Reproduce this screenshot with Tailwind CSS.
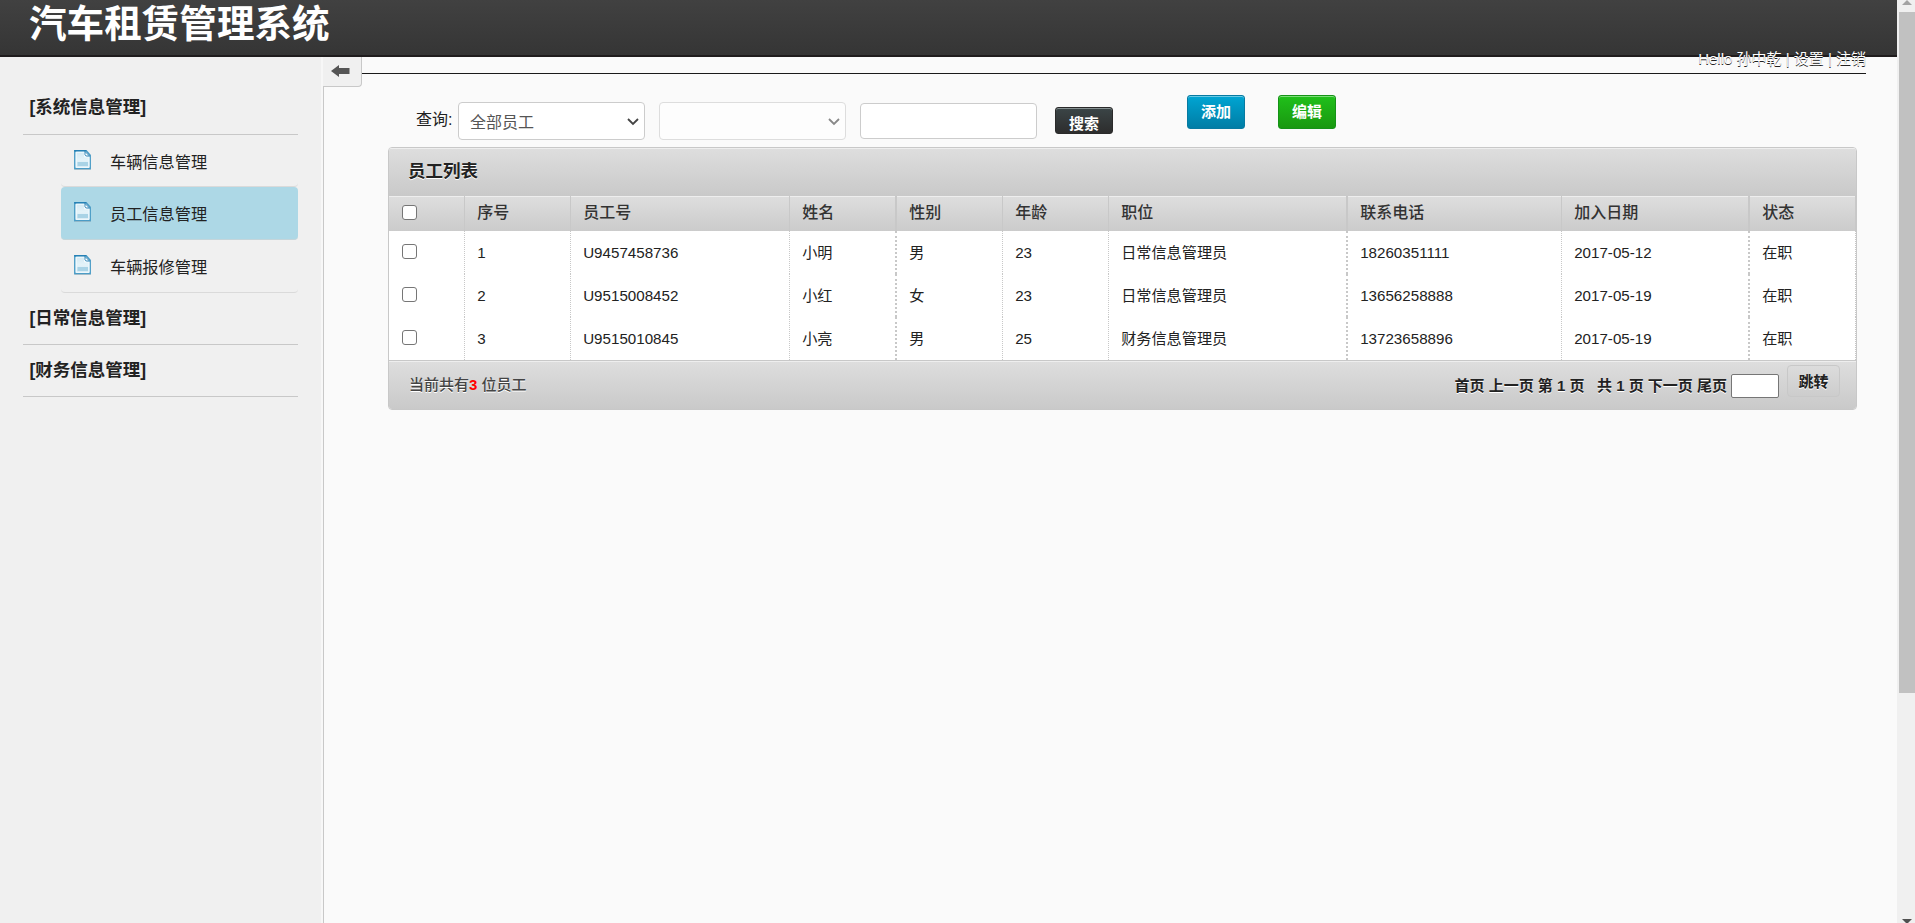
<!DOCTYPE html>
<html lang="zh-CN">
<head>
<meta charset="utf-8">
<title>汽车租赁管理系统</title>
<script src="https://cdn.jsdelivr.net/npm/@tailwindcss/browser@4"></script>
</head>
<body class="h-[923px] w-[1915px] overflow-hidden bg-[#fafafa] font-['Liberation_Sans','Noto_Sans_CJK_SC',sans-serif] text-[#222]">
<svg class="absolute size-0">
  <defs><linearGradient id="sheet" x1="0" y1="0" x2="0" y2="1"><stop offset="0" stop-color="#d2e8f2"/><stop offset=".5" stop-color="#e4f3f9"/><stop offset="1" stop-color="#cfe7f2"/></linearGradient></defs>
  <symbol id="doc" viewBox="0 0 17 20">
    <path d="M.8.8h11.400l4 4.500v13.400H.8z" fill="url(#sheet)" stroke="#4b9cc6" stroke-width="1.500"/>
    <path d="M.2.8h12" stroke="#2480b5" stroke-width="1.500"/>
    <path d="M2.200 2.200h8.300v4.800h4.500v10.300H2.200z" fill="none" stroke="#f4fbfe"/>
    <path d="M3.500 12h10.500v4H3.500z" fill="#a9d3e6"/>
    <path d="M11 1.500v3.200l1.200 1.300h3.300z" fill="#fff" stroke="#3487b7"/>
    <path d="M1 19.700h15.500" stroke="#a5b4bc" stroke-width=".7"/>
  </symbol>
</svg>
<div class="flex h-full">
  <div class="flex w-[1897px] flex-col">
    <header class="h-[57px] border-b-2 border-[#1f1c1d] bg-gradient-to-b from-[#414141] to-[#353535] pl-[29px]">
      <h1 class="text-[37.600px] leading-[48px] font-bold text-white">汽车租赁管理系统</h1>
    </header>
    <div class="flex flex-1">
      <aside class="w-[324px] border-r border-[#c8c8c8] bg-[#f0f0f0] pt-[25px] pl-[23px] shadow-[inset_-2px_0_0_#f7f7f7]">
        <nav class="w-[275px] font-bold text-[17.500px]">
          <h2 class="h-[53px] border-b border-[#c8c8c8] pl-[6.500px] leading-[50px]">[系统信息管理]</h2>
          <ul class="pl-[38px] text-[16.200px] font-normal">
            <li class="flex h-[52px] rounded-[4px] border-b border-[#dadada] pt-[15px] pl-[13px]"><svg class="h-5 w-[17px]"><use href="#doc"/></svg><a class="ml-[19px] leading-6">车辆信息管理</a></li>
            <li class="flex h-[53px] rounded-[4px] border-b border-[#c4d5da] bg-[#add8e6] pt-[15px] pl-[13px]"><svg class="h-5 w-[17px]"><use href="#doc"/></svg><a class="ml-[19px] leading-6">员工信息管理</a></li>
            <li class="flex h-[53px] rounded-[4px] border-b border-[#dadada] pt-[15px] pl-[13px]"><svg class="h-5 w-[17px]"><use href="#doc"/></svg><a class="ml-[19px] leading-6">车辆报修管理</a></li>
          </ul>
          <h2 class="h-[52px] border-b border-[#c8c8c8] pl-[6.500px] leading-[50px]">[日常信息管理]</h2>
          <h2 class="h-[52px] border-b border-[#c8c8c8] pl-[6.500px] leading-[50px]">[财务信息管理]</h2>
        </nav>
      </aside>
      <main class="flex w-[1573px] flex-col">
        <div class="flex h-[30px]">
          <button class="-ml-px flex h-[30px] w-[39px] items-start rounded-br-[4px] border-r border-b border-[#c8c8c8] bg-[#f0f0f0] pt-2 pl-2">
            <svg class="h-3 w-[19px]" viewBox="0 0 19 12"><path d="M0 6l8-6v3h10.500v6H8v3z" fill="#555"/></svg>
          </button>
          <div class="relative h-[17px] w-[1504px] border-b border-[#1a1a1a]">
            <p class="absolute right-0 -top-[8px] text-[15px] leading-5 whitespace-nowrap text-white [text-shadow:0_1px_0_#222]">Hello 孙中乾 | 设置 | 注销</p>
          </div>
        </div>
        <section class="flex h-[60px] items-start pl-[92px]">
          <label class="mt-[21px] w-[42px] text-[16px] leading-6 whitespace-nowrap">查询:</label>
          <div class="mt-[15px] flex h-[38px] w-[187px] items-center justify-between rounded-[4px] border border-[#ccc] bg-white pr-[5px] pl-[11px] text-[16px] text-[#555]"><span class="pt-[3px]">全部员工</span>
            <svg class="mt-px h-2 w-3" viewBox="0 0 12 8" fill="none" stroke="#444" stroke-width="1.800"><path d="M1 1l5 5 5-5"/></svg></div>
          <div class="mt-[15px] ml-[14px] flex h-[38px] w-[187px] items-center justify-end rounded-[4px] border border-[#ddd] bg-[#fdfdfd] pr-[5px]">
            <svg class="mt-px h-2 w-3" viewBox="0 0 12 8" fill="none" stroke="#888" stroke-width="1.800"><path d="M1 1l5 5 5-5"/></svg></div>
          <input class="mt-[16px] ml-[14px] h-9 w-[177px] rounded-[4px] border border-[#ccc] bg-white">
          <button class="mt-[20px] ml-[18px] h-[27px] w-[58px] rounded-[3px] border border-[#2a2a2a] bg-gradient-to-b from-[#3b4547] to-[#2d2d2d] pt-[5px] text-[15px] leading-[22px] font-bold text-white shadow-[inset_0_1px_0_#869091]">搜索</button>
          <button class="mt-[8px] ml-[74px] h-[34px] w-[58px] rounded-[3px] border border-[#077aa1] bg-gradient-to-b from-[#00a5d3] to-[#007da5] text-[15px] leading-[30px] font-bold text-white shadow-[inset_0_1px_0_#6ac9e4]">添加</button>
          <button class="mt-[8px] ml-[33px] h-[34px] w-[58px] rounded-[3px] border border-[#159217] bg-gradient-to-b from-[#20c01a] to-[#199810] text-[15px] leading-[30px] font-bold text-white shadow-[inset_0_1px_0_#7cdc78]">编辑</button>
        </section>
        <section class="ml-[64px] h-[263px] w-[1469px] overflow-hidden rounded-[4px] border border-[#c8c8c8] bg-white">
          <h3 class="h-[48px] bg-gradient-to-b from-[#dedede] to-[#c9c9c9] pl-[19px] text-[17.500px] leading-[46px] font-bold shadow-[inset_0_1px_0_#eee] [text-shadow:0_1px_0_#fff]">员工列表</h3>
          <table class="w-[1467px] table-fixed border-separate border-spacing-0 text-left text-[15.150px] [&_td]:h-[43px] [&_td]:border-r [&_td]:border-dotted [&_td]:border-[#c8c8c8] [&_td]:py-0 [&_td]:pt-[2px] [&_td]:pl-[12.200px] [&_th]:h-[35px] [&_th]:border-r [&_th]:border-[#c8c8c8] [&_th]:py-0 [&_th]:pb-[2px] [&_th]:pl-[12.200px] [&_th]:text-[16px] [&_th]:font-medium [&_th]:shadow-[inset_0_1px_0_#eee] [&_tr>*:first-child]:pt-0 [&_tr>*:first-child]:pl-3 [&_tr>*:nth-child(4)]:border-r-2 [&_tr>*:nth-child(7)]:border-r-2 [&_tr>*:nth-child(9)]:border-r-2">
            <colgroup><col class="w-[76px]"><col class="w-[106px]"><col class="w-[219px]"><col class="w-[107px]"><col class="w-[106px]"><col class="w-[106px]"><col class="w-[239px]"><col class="w-[214px]"><col class="w-[188px]"><col class="w-[106px]"></colgroup>
            <thead class="text-[#333]"><tr class="bg-gradient-to-b from-[#dedede] to-[#cbcbcb]"><th><div class="ml-px size-[15px] rounded-[3px] border border-[#767676] bg-white"></div></th><th>序号</th><th>员工号</th><th>姓名</th><th>性别</th><th>年龄</th><th>职位</th><th>联系电话</th><th>加入日期</th><th>状态</th></tr></thead>
            <tbody>
              <tr><td><div class="-mt-[2px] ml-px size-[15px] rounded-[3px] border border-[#767676] bg-white"></div></td><td>1</td><td>U9457458736</td><td>小明</td><td>男</td><td>23</td><td>日常信息管理员</td><td>18260351111</td><td>2017-05-12</td><td>在职</td></tr>
              <tr><td><div class="-mt-[2px] ml-px size-[15px] rounded-[3px] border border-[#767676] bg-white"></div></td><td>2</td><td>U9515008452</td><td>小红</td><td>女</td><td>23</td><td>日常信息管理员</td><td>13656258888</td><td>2017-05-19</td><td>在职</td></tr>
              <tr><td><div class="-mt-[2px] ml-px size-[15px] rounded-[3px] border border-[#767676] bg-white"></div></td><td>3</td><td>U9515010845</td><td>小亮</td><td>男</td><td>25</td><td>财务信息管理员</td><td>13723658896</td><td>2017-05-19</td><td>在职</td></tr>
            </tbody>
          </table>
          <footer class="flex h-[50px] items-start justify-between border-t border-[#c8c8c8] bg-gradient-to-b from-[#dedede] to-[#c9c9c9] pr-[16px] pl-5 text-[15px] shadow-[inset_0_1px_0_#eee] [text-shadow:0_1px_0_#fff]">
            <p class="mt-[14px] leading-5 font-medium text-[#444]">当前共有<b class="text-[#f00] [text-shadow:none]">3</b> 位员工</p>
            <div class="flex items-start">
              <p class="mt-[15px] w-[276.500px] text-[15px] leading-5 font-bold whitespace-pre">首页 上一页 第 1 页   共 1 页 下一页 尾页</p>
              <input class="mt-[13px] h-6 w-12 rounded-[2px] border border-[#767676] bg-white">
              <button class="mt-[4px] ml-2 h-8 w-[53px] rounded-[4px] border border-[#c8c8c8] bg-gradient-to-b from-[#dcdcdc] to-[#cdcdcd] pt-px text-[15px] leading-[30px] font-bold [text-shadow:0_1px_0_#fff]">跳转</button>
            </div>
          </footer>
        </section>
      </main>
    </div>
  </div>
  <div class="flex w-[18px] flex-col items-end justify-between bg-[#f0f0f0]">
    <svg class="mr-[3px] h-[5px] w-[10px]" viewBox="0 0 10 5"><path d="M5 0l5 5H0z" fill="#a3a3a3"/></svg>
    <div class="mt-[7px] mb-auto h-[681px] w-4 bg-[#c1c1c1]"></div>
    <svg class="mr-[3px] h-[4px] w-[10px]" viewBox="0 0 10 4"><path d="M0 0h10L6 4H4z" fill="#505050"/></svg>
  </div>
</div>
</body>
</html>
